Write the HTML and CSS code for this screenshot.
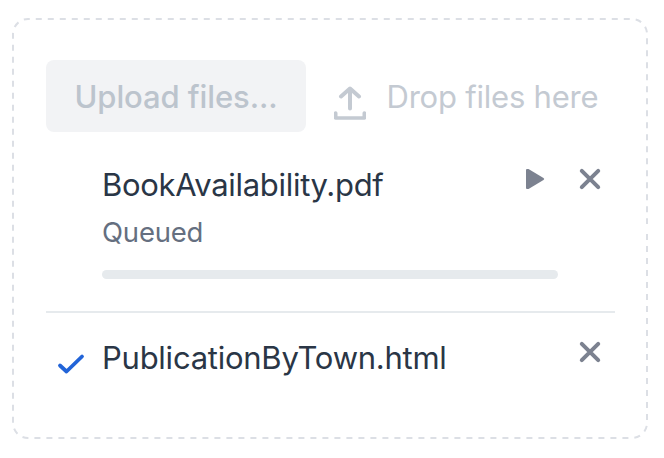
FILE: index.html
```html
<!DOCTYPE html>
<html lang="en">
<head>
<meta charset="utf-8">
<title>Upload</title>
<link rel="stylesheet" href="styles.css">
</head>
<body>
<main class="upload">
  <svg class="outline" viewBox="0 0 636 421" aria-hidden="true"><path d="M635 216V405A15 15 0 0 1 620 420H16A15 15 0 0 1 1 405V16A15 15 0 0 1 16 1H620A15 15 0 0 1 635 16V206"/></svg>
  <header class="toolbar">
    <button class="button" disabled><span class="button-label">Upload files...</span></button>
    <div class="drop">
      <svg class="drop-icon" viewBox="0 0 32 34" aria-hidden="true"><path d="M16 22.500V3M7 10.500l9-8 9 8" stroke-width="4"/><path d="M1.700 27v5h28.600v-5" stroke-width="3.600"/></svg>
      <span class="drop-label">Drop files here</span>
    </div>
  </header>
  <ul class="files">
    <li class="file">
      <div class="status"></div>
      <div class="info">
        <div><span class="name">BookAvailability.pdf</span></div>
        <div class="state"><span class="state-label">Queued</span></div>
        <div class="progress"></div>
      </div>
      <div class="actions">
        <svg class="icon" viewBox="0 0 20 20"><path class="solid" d="M0 1Q0 0 1 0H2.500L17.500 9Q19 10 17.500 11L2.500 20H1Q0 20 0 19Z"/></svg>
        <svg class="icon" viewBox="0 0 20 20"><path d="M1.800 1.800l16.400 16.400M18.200 1.800L1.800 18.200"/></svg>
      </div>
    </li>
    <li class="file">
      <div class="status"><svg class="check" viewBox="0 0 28 22"><path d="M3 12.500l6.500 6L25 3.500"/></svg></div>
      <div class="info"><div><span class="name name-html">PublicationByTown.html</span></div></div>
      <div class="actions">
        <svg class="icon" viewBox="0 0 20 20"><path d="M1.800 1.800l16.400 16.400M18.200 1.800L1.800 18.200"/></svg>
      </div>
    </li>
  </ul>
</main>
</body>
</html>
```
FILE: styles.css
```css
* { box-sizing: border-box; }
body { margin: 0; background: #fff; font-family: Inter, "Liberation Sans", sans-serif; }
.upload {
  position: relative;
  width: 636px;
  height: 421px;
  margin: 18px 12px;
  padding: 42px 33px 0 34px;
}
.outline { position: absolute; inset: 0; width: 636px; height: 421px; }
.outline path { fill: none; stroke: #dcdfe5; stroke-width: 2; stroke-dasharray: 6 6; }
.toolbar { display: flex; align-items: center; height: 72px; }
.button {
  width: 260px;
  height: 72px;
  padding: 2px 0 0 28.5px;
  border: 0;
  border-radius: 8px;
  background: #f2f3f5;
  color: #bcc4cd;
  font: 500 31px/40px Inter, sans-serif;
  letter-spacing: -0.1px;
  text-align: left;
  white-space: nowrap;
}
.drop { display: flex; align-items: center; margin-left: 28px; color: #c4cad2; }
.drop-icon { width: 32px; height: 34px; margin-top: 13px; fill: none; stroke: currentColor; stroke-linecap: round; stroke-linejoin: round; }
.drop-label { margin: 2px 0 0 20.5px; font-size: 31px; line-height: 40px; letter-spacing: -0.22px; white-space: nowrap; }
.files { margin: 0; padding: 0; list-style: none; }
.file { display: flex; height: 181px; padding-top: 33px; border-bottom: 2px solid #e6eaed; }
.file:last-child { height: 100px; padding-top: 25px; border: 0; }
.status { width: 56px; padding: 15px 0 0 11px; }
.info { width: 456px; }
.name { color: #2a3646; font-size: 31px; line-height: 40px; letter-spacing: -0.3px; white-space: nowrap; }
.name-html { letter-spacing: -0.25px; }
.state { margin-top: 9px; color: #656f80; font-size: 27.5px; line-height: 36px; letter-spacing: -0.2px; }
.progress { height: 9px; margin-top: 20px; border-radius: 4.5px; background: #e6eaed; }
.actions { display: flex; flex: 1; justify-content: flex-end; gap: 34px; padding: 4px 15px 0 0; margin-left: -60px; }
.icon { width: 20px; height: 20px; overflow: visible; fill: none; stroke: #7c8290; stroke-width: 4; stroke-linecap: round; }
.icon .solid { fill: #7c8290; stroke: none; }
.check { display: block; width: 28px; height: 22px; fill: none; stroke: #2264d8; stroke-width: 3.8; stroke-linecap: round; stroke-linejoin: round; }
```
